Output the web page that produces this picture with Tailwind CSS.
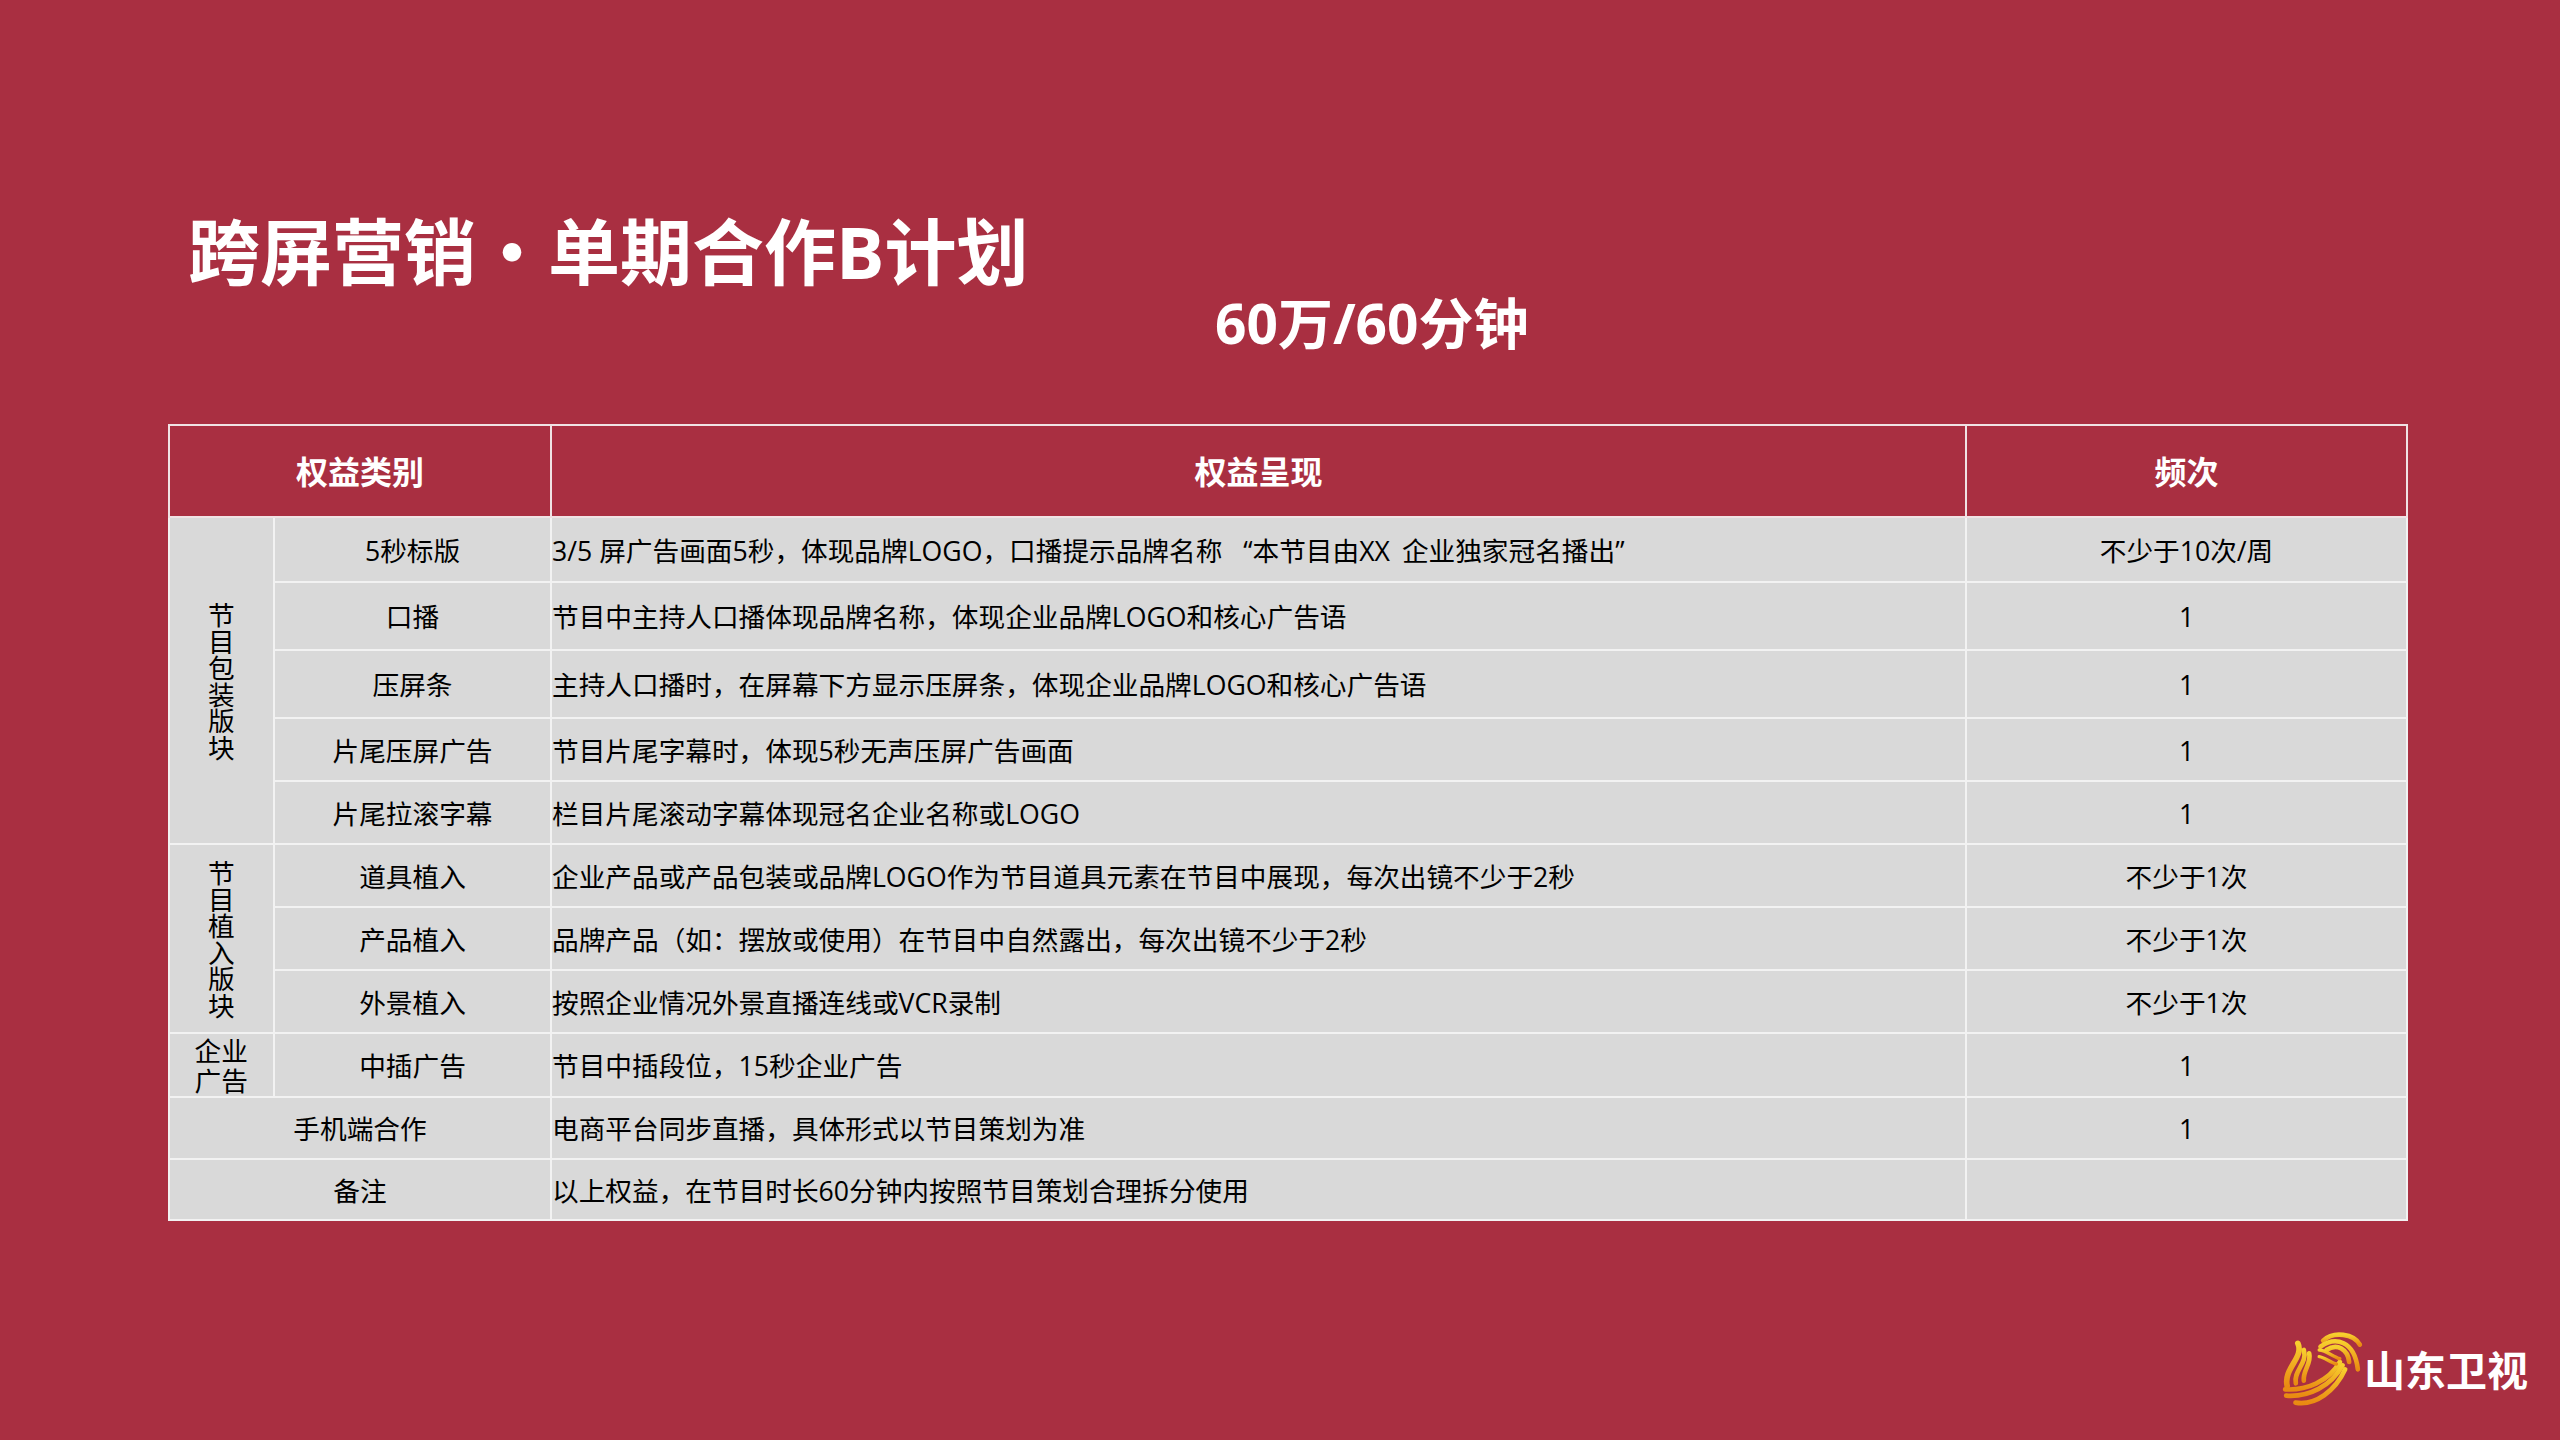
<!DOCTYPE html>
<html lang="zh-CN">
<head>
  <meta charset="UTF-8" />
  <title>跨屏营销·单期合作B计划</title>
  <script src="https://cdn.jsdelivr.net/npm/@tailwindcss/browser@4"></script>
</head>
<body class="w-[2560px] h-[1440px] overflow-hidden bg-[#a92f41] font-['Open_Sans','Noto_Sans_CJK_SC',sans-serif] text-black">
  <!-- Title -->
  <h1 class="pt-[212px] pl-[188px] text-[72px] leading-[72px] font-bold text-white">跨屏营销<span class="font-['Noto_Sans_CJK_SC']">・</span>单期合作B计划</h1>
  <p class="mt-[9px] pl-[1215px] text-[55px] leading-[53px] font-bold text-white">60万/60分钟</p>

  <!-- Table -->
  <table class="mt-[75px] ml-[168px] w-[2238px] table-fixed border-collapse text-[26.67px] leading-[34px] [&_td]:pt-[2px] [&_th]:pt-[2px]">
    <colgroup>
      <col class="w-[105px]" />
      <col class="w-[277px]" />
      <col class="w-[1415px]" />
      <col class="w-[441px]" />
    </colgroup>
    <thead>
      <tr class="h-[92px] text-[32px] font-bold text-white">
        <th colspan="2" class="border-2 border-[#f0e2e4] text-center">权益类别</th>
        <th class="border-2 border-[#f0e2e4] text-center">权益呈现</th>
        <th class="border-2 border-[#f0e2e4] text-center">频次</th>
      </tr>
    </thead>
    <tbody class="bg-[#d9d9d9]">
      <tr class="h-[65px]">
        <td rowspan="5" class="border-2 border-[#f2f2f2]"><div class="mx-auto w-[27px] leading-[26.5px]">节目包装版块</div></td>
        <td class="border-2 border-[#f2f2f2] text-center">5秒标版</td>
        <td class="border-2 border-[#f2f2f2]">3/5 屏广告画面5秒，体现品牌LOGO，口播提示品牌名称 <span class="ml-[14px]">“</span>本节目由XX <span class="ml-[5px]">企业独家冠名播出”</span></td>
        <td class="border-2 border-[#f2f2f2] text-center">不少于10次/周</td>
      </tr>
      <tr class="h-[68px]">
        <td class="border-2 border-[#f2f2f2] text-center">口播</td>
        <td class="border-2 border-[#f2f2f2]">节目中主持人口播体现品牌名称，体现企业品牌LOGO和核心广告语</td>
        <td class="border-2 border-[#f2f2f2] text-center">1</td>
      </tr>
      <tr class="h-[68px]">
        <td class="border-2 border-[#f2f2f2] text-center">压屏条</td>
        <td class="border-2 border-[#f2f2f2]">主持人口播时，在屏幕下方显示压屏条，体现企业品牌LOGO和核心广告语</td>
        <td class="border-2 border-[#f2f2f2] text-center">1</td>
      </tr>
      <tr class="h-[63px]">
        <td class="border-2 border-[#f2f2f2] text-center">片尾压屏广告</td>
        <td class="border-2 border-[#f2f2f2]">节目片尾字幕时，体现5秒无声压屏广告画面</td>
        <td class="border-2 border-[#f2f2f2] text-center">1</td>
      </tr>
      <tr class="h-[63px]">
        <td class="border-2 border-[#f2f2f2] text-center">片尾拉滚字幕</td>
        <td class="border-2 border-[#f2f2f2]">栏目片尾滚动字幕体现冠名企业名称或LOGO</td>
        <td class="border-2 border-[#f2f2f2] text-center">1</td>
      </tr>
      <tr class="h-[63px]">
        <td rowspan="3" class="border-2 border-[#f2f2f2]"><div class="mx-auto w-[27px] leading-[26.5px]">节目植入版块</div></td>
        <td class="border-2 border-[#f2f2f2] text-center">道具植入</td>
        <td class="border-2 border-[#f2f2f2]">企业产品或产品包装或品牌LOGO作为节目道具元素在节目中展现，每次出镜不少于2秒</td>
        <td class="border-2 border-[#f2f2f2] text-center">不少于1次</td>
      </tr>
      <tr class="h-[63px]">
        <td class="border-2 border-[#f2f2f2] text-center">产品植入</td>
        <td class="border-2 border-[#f2f2f2]">品牌产品（如：摆放或使用）在节目中自然露出，每次出镜不少于2秒</td>
        <td class="border-2 border-[#f2f2f2] text-center">不少于1次</td>
      </tr>
      <tr class="h-[63px]">
        <td class="border-2 border-[#f2f2f2] text-center">外景植入</td>
        <td class="border-2 border-[#f2f2f2]">按照企业情况外景直播连线或VCR录制</td>
        <td class="border-2 border-[#f2f2f2] text-center">不少于1次</td>
      </tr>
      <tr class="h-[64px]">
        <td class="border-2 border-[#f2f2f2]"><div class="mx-auto w-[54px] leading-[30px]">企业广告</div></td>
        <td class="border-2 border-[#f2f2f2] text-center">中插广告</td>
        <td class="border-2 border-[#f2f2f2]">节目中插段位，15秒企业广告</td>
        <td class="border-2 border-[#f2f2f2] text-center">1</td>
      </tr>
      <tr class="h-[62px]">
        <td colspan="2" class="border-2 border-[#f2f2f2] text-center">手机端合作</td>
        <td class="border-2 border-[#f2f2f2]">电商平台同步直播，具体形式以节目策划为准</td>
        <td class="border-2 border-[#f2f2f2] text-center">1</td>
      </tr>
      <tr class="h-[61px]">
        <td colspan="2" class="border-2 border-[#f2f2f2] text-center">备注</td>
        <td class="border-2 border-[#f2f2f2]">以上权益，在节目时长60分钟内按照节目策划合理拆分使用</td>
        <td class="border-2 border-[#f2f2f2] text-center"></td>
      </tr>
    </tbody>
  </table>

  <!-- Logo -->
  <div class="mt-[109px] mr-[32px] flex items-center justify-end">
    <svg width="82" height="80" viewBox="125 90 245 240" fill="none" stroke-linecap="round">
      <defs>
        <linearGradient id="gold" x1="0" y1="0" x2="0" y2="1">
          <stop offset="0" stop-color="#f7cf2e" />
          <stop offset="1" stop-color="#e98a12" />
        </linearGradient>
      </defs>
      <g stroke="url(#gold)" stroke-width="14">
        <path d="M134 268C195 272 265 245 298 186" />
        <path d="M137 287C205 292 272 258 306 196" />
        <path d="M165 308C225 318 285 272 314 208" />
        <path d="M172 130C192 172 128 205 140 258" stroke-width="17" />
        <path d="M190 150C202 190 158 212 166 250" />
        <path d="M206 160C214 190 186 212 190 242" />
        <path d="M248 122C280 92 340 102 358 134" />
        <path d="M240 140C285 108 342 122 352 208" />
        <path d="M258 150C290 128 322 148 326 186" />
        <path d="M236 150C255 150 280 172 298 176" stroke-width="10" />
        <path d="M236 170C252 172 270 188 288 192" stroke-width="10" />
      </g>
    </svg>
    <span class="text-[41px] leading-[44px] font-bold text-white">山东卫视</span>
  </div>
</body>
</html>
